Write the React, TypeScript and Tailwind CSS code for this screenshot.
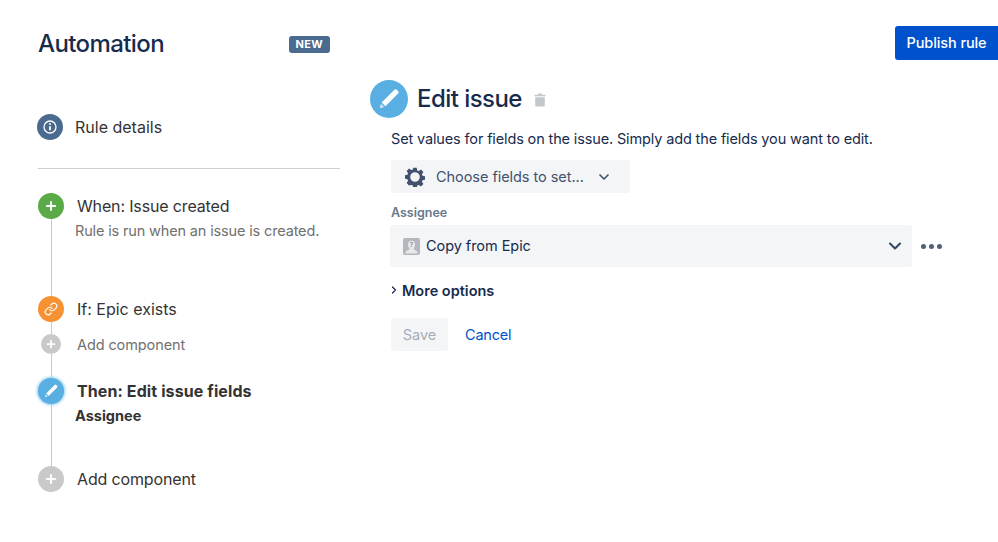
import { ChevronDown, ChevronRight, Link, Plus } from 'lucide-react';
import type { ReactNode } from 'react';

function PencilIcon({ className }: { className: string }) {
    return (
        <svg viewBox="0 0 16 16" className={className} fill="currentColor">
            <path d="M11.600 1.900 a1.100 1.100 0 0 1 1.600 0 l0.900 0.900 a1.100 1.100 0 0 1 0 1.600 L5.600 12.900 3.100 10.400 Z" />
            <path d="M2.600 11.200 L4.800 13.400 L1.800 14.200 Z" opacity="0.7" />
        </svg>
    );
}

function TrashIcon() {
    return (
        <svg viewBox="0 0 12 14" className="w-3 h-3.5" fill="#c4c7cc">
            <path d="M4 0.500h4v1.200h3.500v1.600h-11V1.700H4z" />
            <path d="M1.200 4.200h9.600v8.300a1 1 0 0 1-1 1H2.200a1 1 0 0 1-1-1z" />
        </svg>
    );
}

function GearIcon() {
    return (
        <svg viewBox="0 0 20 20" className="w-5 h-5 shrink-0" fill="#42526e">
            <path
                fillRule="evenodd"
                d="M8.300 0.800h3.400l.5 2.600 1.600.7 2.200-1.500 2.400 2.400-1.500 2.200.7 1.600 2.600.5v3.400l-2.600.5-.7 1.600 1.500 2.200-2.400 2.400-2.200-1.500-1.600.7-.5 2.600H8.300l-.5-2.600-1.600-.7L4 18.400 1.600 16l1.500-2.200-.7-1.600-2.600-.5V8.300l2.600-.5.7-1.600L1.600 4 4 1.600l2.200 1.500 1.600-.7zM10 5.200a4.800 4.800 0 1 0 0 9.600 4.800 4.800 0 0 0 0-9.600z"
            />
        </svg>
    );
}

function AvatarIcon() {
    return (
        <svg viewBox="0 0 17 17" className="w-[17px] h-[17px] mr-1.5 shrink-0">
            <rect width="17" height="17" rx="2" fill="#b4b7bd" />
            <path d="M2.500 15.500c0-2.600 2.400-3.200 3.800-3.900V10C5.200 9 5 7.600 5 6.200 5 4 6.500 2.800 8.500 2.800S12 4 12 6.200c0 1.400-.2 2.800-1.300 3.800v1.600c1.400.7 3.800 1.300 3.800 3.900z" fill="#e8e9eb" />
            <text x="8.500" y="8.500" fontSize="6" fontWeight="700" textAnchor="middle" fill="#8a8e96" fontFamily="Inter, sans-serif">?</text>
        </svg>
    );
}

type StepProps = {
    icon: ReactNode;
    circle: string;
    height: string;
    last?: boolean;
    children: ReactNode;
};

// one node of the rule timeline: circle + connector line on the left, text on the right
function Step({ icon, circle, height, last, children }: StepProps) {
    return (
        <div className={`flex ${height}`}>
            <div className="w-[26px] flex flex-col items-center shrink-0">
                <div className={`rounded-full flex items-center justify-center shrink-0 ${circle}`}>{icon}</div>
                {!last && <div className="w-px flex-1 bg-[#c9c9c9]" />}
            </div>
            <div className="ml-[13px] min-w-0">{children}</div>
        </div>
    );
}

export default function App() {
    return (
        <div className="w-[998px] h-[542px] bg-white overflow-hidden flex pl-[38px] font-['Inter','Liberation_Sans',sans-serif] antialiased">
            {/* Sidebar */}
            <aside className="w-[302px] shrink-0 pt-[28px]">
                <div className="flex items-center justify-between h-8 pr-2.5">
                    <h1 className="text-[24px] font-medium tracking-[-0.6px] text-[#172b4d]">Automation</h1>
                    <span className="bg-[#4a6a8f] text-white text-[11px] font-bold rounded-[3px] px-[7px] h-[17px] leading-[17px] tracking-[0.3px]">NEW</span>
                </div>

                <div className="flex items-center mt-[54px] -ml-px">
                    <div className="w-[26px] h-[26px] rounded-full bg-[#4a6a8f] flex items-center justify-center">
                        <svg viewBox="0 0 14 14" className="w-3.5 h-3.5 text-white" fill="none" stroke="currentColor">
                            <circle cx="7" cy="7" r="6" strokeWidth="1.300" />
                            <path d="M7 6.200v4" strokeWidth="1.800" />
                            <circle cx="7" cy="4" r="1" fill="currentColor" stroke="none" />
                        </svg>
                    </div>
                    <span className="ml-3 text-[16px] text-[#333]">Rule details</span>
                </div>

                <div className="h-px bg-[#cfcfcf] mt-7 mb-6" />

                <Step height="h-[103px]" circle="w-[26px] h-[26px] bg-[#5aab47]" icon={<Plus className="w-3.5 h-3.5 text-white" strokeWidth={3.500} />}>
                    <div className="text-[16px] leading-[26px] text-[#333] -tracking-[0.15px]">When: Issue created</div>
                    <div className="text-[14.5px] leading-[24px] text-[#707070] -ml-0.5 -tracking-[0.15px]">Rule is run when an issue is created.</div>
                </Step>
                <Step height="h-[38px]" circle="w-[26px] h-[26px] bg-[#f79232]" icon={<Link className="w-3.5 h-3.5 text-white" strokeWidth={2} />}>
                    <div className="text-[16px] leading-[26px] text-[#333]">If: Epic exists</div>
                </Step>
                <Step height="h-[44px]" circle="w-5 h-5 bg-[#c9c9c9]" icon={<Plus className="w-3 h-3 text-white" strokeWidth={3.500} />}>
                    <div className="text-[14.5px] leading-5 pt-px text-[#707070] -tracking-[0.1px]">Add component</div>
                </Step>
                <Step height="h-[88px]" circle="w-[26px] h-[26px] bg-[#59afe1] shadow-[0_0_3px_1px_#8fcdf0]" icon={<PencilIcon className="w-4 h-4 text-white" />}>
                    <div className="text-[16px] leading-[26px] font-bold text-[#333] tracking-[0.1px]">Then: Edit issue fields</div>
                    <div className="text-[14.5px] leading-[24px] font-bold text-[#333] -ml-0.5">Assignee</div>
                </Step>
                <Step last height="h-[26px]" circle="w-[26px] h-[26px] bg-[#c9c9c9]" icon={<Plus className="w-3.5 h-3.5 text-white" strokeWidth={3.500} />}>
                    <div className="text-[16px] leading-[26px] text-[#333] -tracking-[0.15px]">Add component</div>
                </Step>
            </aside>

            {/* Editor */}
            <main className="flex-1 min-w-0 ml-[30px] pt-[26px] relative">
                <button className="absolute top-[26px] right-0 w-[103px] h-[34px] bg-[#0052cc] text-white text-[14.5px] font-medium -tracking-[0.1px] rounded-l-[3px]">
                    Publish rule
                </button>

                <div className="flex items-center mt-[54px]">
                    <div className="w-[38px] h-[38px] rounded-full bg-[#59afe1] flex items-center justify-center">
                        <PencilIcon className="w-[24px] h-[24px] text-white" />
                    </div>
                    <h2 className="ml-[9px] text-[24px] font-medium tracking-[-0.55px] text-[#172b4d]">Edit issue</h2>
                    <span className="ml-[12px] mt-0.5"><TrashIcon /></span>
                </div>

                <div className="pl-[21px] w-[543px]">
                    <p className="mt-[9px] text-[14.5px] leading-[24px] text-[#172b4d] -tracking-[0.14px] whitespace-nowrap">
                        Set values for fields on the issue. Simply add the fields you want to edit.
                    </p>

                    <button className="mt-[9px] w-[239px] h-[33px] bg-[#f4f5f7] rounded-[3px] flex items-center pl-3.5 text-[#42526e] text-[14.5px] -tracking-[0.05px]">
                        <GearIcon />
                        <span className="ml-[11px]">Choose fields to set...</span>
                        <ChevronDown className="w-4 h-4 ml-[12px]" strokeWidth={2.500} />
                    </button>

                    <div className="mt-3 text-[12.5px] leading-4 font-semibold text-[#6b778c]">Assignee</div>

                    <div className="relative mt-1">
                        <div className="-ml-px w-[522px] h-[42px] bg-[#f4f5f7] rounded-[3px] flex items-center pl-[13px] pr-[7px] text-[14.5px] text-[#172b4d] -tracking-[0.05px]">
                            <AvatarIcon />
                            <span className="flex-1">Copy from Epic</span>
                            <ChevronDown className="w-5 h-5 text-[#344563]" strokeWidth={2.500} />
                        </div>
                        <div className="absolute left-[530px] top-[19px] flex gap-[3px]">
                            <span className="w-[5px] h-[5px] rounded-full bg-[#505f79]" />
                            <span className="w-[5px] h-[5px] rounded-full bg-[#505f79]" />
                            <span className="w-[5px] h-[5px] rounded-full bg-[#505f79]" />
                        </div>
                    </div>

                    <div className="mt-3 h-6 flex items-center text-[14.5px] font-semibold text-[#172b4d]">
                        <ChevronRight className="w-3 h-3 -ml-[3px] mr-[2px] -mt-0.5" strokeWidth={2.500} />
                        More options
                    </div>

                    <div className="mt-[15px] flex items-center">
                        <button className="w-[57px] h-[33px] bg-[#f4f5f7] rounded-[3px] text-[14.5px] text-[#a5adba]">Save</button>
                        <button className="ml-[17px] text-[14.5px] -tracking-[0.2px] text-[#0052cc]">Cancel</button>
                    </div>
                </div>
            </main>
        </div>
    );
}
